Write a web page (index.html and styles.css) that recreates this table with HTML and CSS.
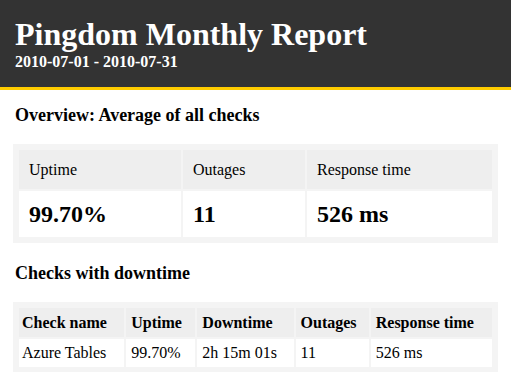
FILE: index.html
```html
<!DOCTYPE html>
<html>
<head>
<meta charset="utf-8">
<link rel="stylesheet" href="styles.css">
</head>
<body>
<header class="banner">
  <h1 class="banner-title">Pingdom Monthly Report</h1>
  <div class="banner-date">2010-07-01 - 2010-07-31</div>
</header>
<main class="content">
  <h2 class="section-title first">Overview: Average of all checks</h2>
  <div class="box">
    <table class="grid overview">
      <thead>
        <tr>
          <th class="ov-c1">Uptime</th>
          <th class="ov-c2">Outages</th>
          <th class="ov-c3">Response time</th>
        </tr>
      </thead>
      <tbody>
        <tr>
          <td>99.70%</td>
          <td>11</td>
          <td>526 ms</td>
        </tr>
      </tbody>
    </table>
  </div>
  <h2 class="section-title">Checks with downtime</h2>
  <div class="box">
    <table class="grid checks">
      <thead>
        <tr>
          <th class="ck-c1">Check name</th>
          <th class="ck-c2">Uptime</th>
          <th class="ck-c3">Downtime</th>
          <th class="ck-c4">Outages</th>
          <th class="ck-c5">Response time</th>
        </tr>
      </thead>
      <tbody>
        <tr>
          <td class="ck-c1">Azure Tables</td>
          <td>99.70%</td>
          <td>2h 15m 01s</td>
          <td>11</td>
          <td>526 ms</td>
        </tr>
      </tbody>
    </table>
  </div>
</main>
</body>
</html>
```

FILE: styles.css
```css
html, body {
  margin: 0;
  padding: 0;
  background: #fff;
}
body {
  font-family: "Liberation Serif", "Times New Roman", serif;
  color: #000;
}
.banner {
  background: #333333;
  color: #fff;
  padding: 16px 15px 16px 15px;
  border-bottom: 3px solid #ffcc00;
}
.banner-title {
  margin: 0;
  font-size: 32px;
  font-weight: bold;
  line-height: normal;
}
.banner-date {
  font-size: 16px;
  font-weight: bold;
  line-height: normal;
}
.content {
  padding: 0 13px;
}
.section-title {
  margin: 20px 0 18px 0;
  padding: 0 2px;
  font-size: 18px;
  font-weight: bold;
  line-height: 21px;
}
.section-title.first {
  margin-top: 15px;
}
.box {
  background: #f4f4f4;
  padding: 4px;
}
.grid {
  width: 100%;
  table-layout: fixed;
  border-collapse: separate;
  border-spacing: 2px;
}
.grid th,
.grid td {
  box-sizing: border-box;
  text-align: left;
  vertical-align: middle;
}
.grid th {
  background: #eeeeee;
}
.grid td {
  background: #ffffff;
}
.overview th {
  font-weight: normal;
  font-size: 16px;
  line-height: 19px;
  padding: 10px 10px;
}
.overview td {
  font-weight: bold;
  font-size: 24px;
  line-height: 28px;
  padding: 9px 10px;
}
.ov-c1 { width: 162px; }
.ov-c2 { width: 122px; }
.ov-c3 { width: 185px; }
.checks th {
  font-weight: bold;
  font-size: 16px;
  line-height: 19px;
  padding: 5px 5px;
}
.checks td {
  font-size: 16px;
  line-height: 18px;
  padding: 5px 5px;
}
.checks .ck-c1 { padding-left: 3px; }
th.ck-c1 { width: 105px; }
th.ck-c2 { width: 69px; }
th.ck-c3 { width: 96px; }
th.ck-c4 { width: 73px; }
th.ck-c5 { width: 121px; }
```
